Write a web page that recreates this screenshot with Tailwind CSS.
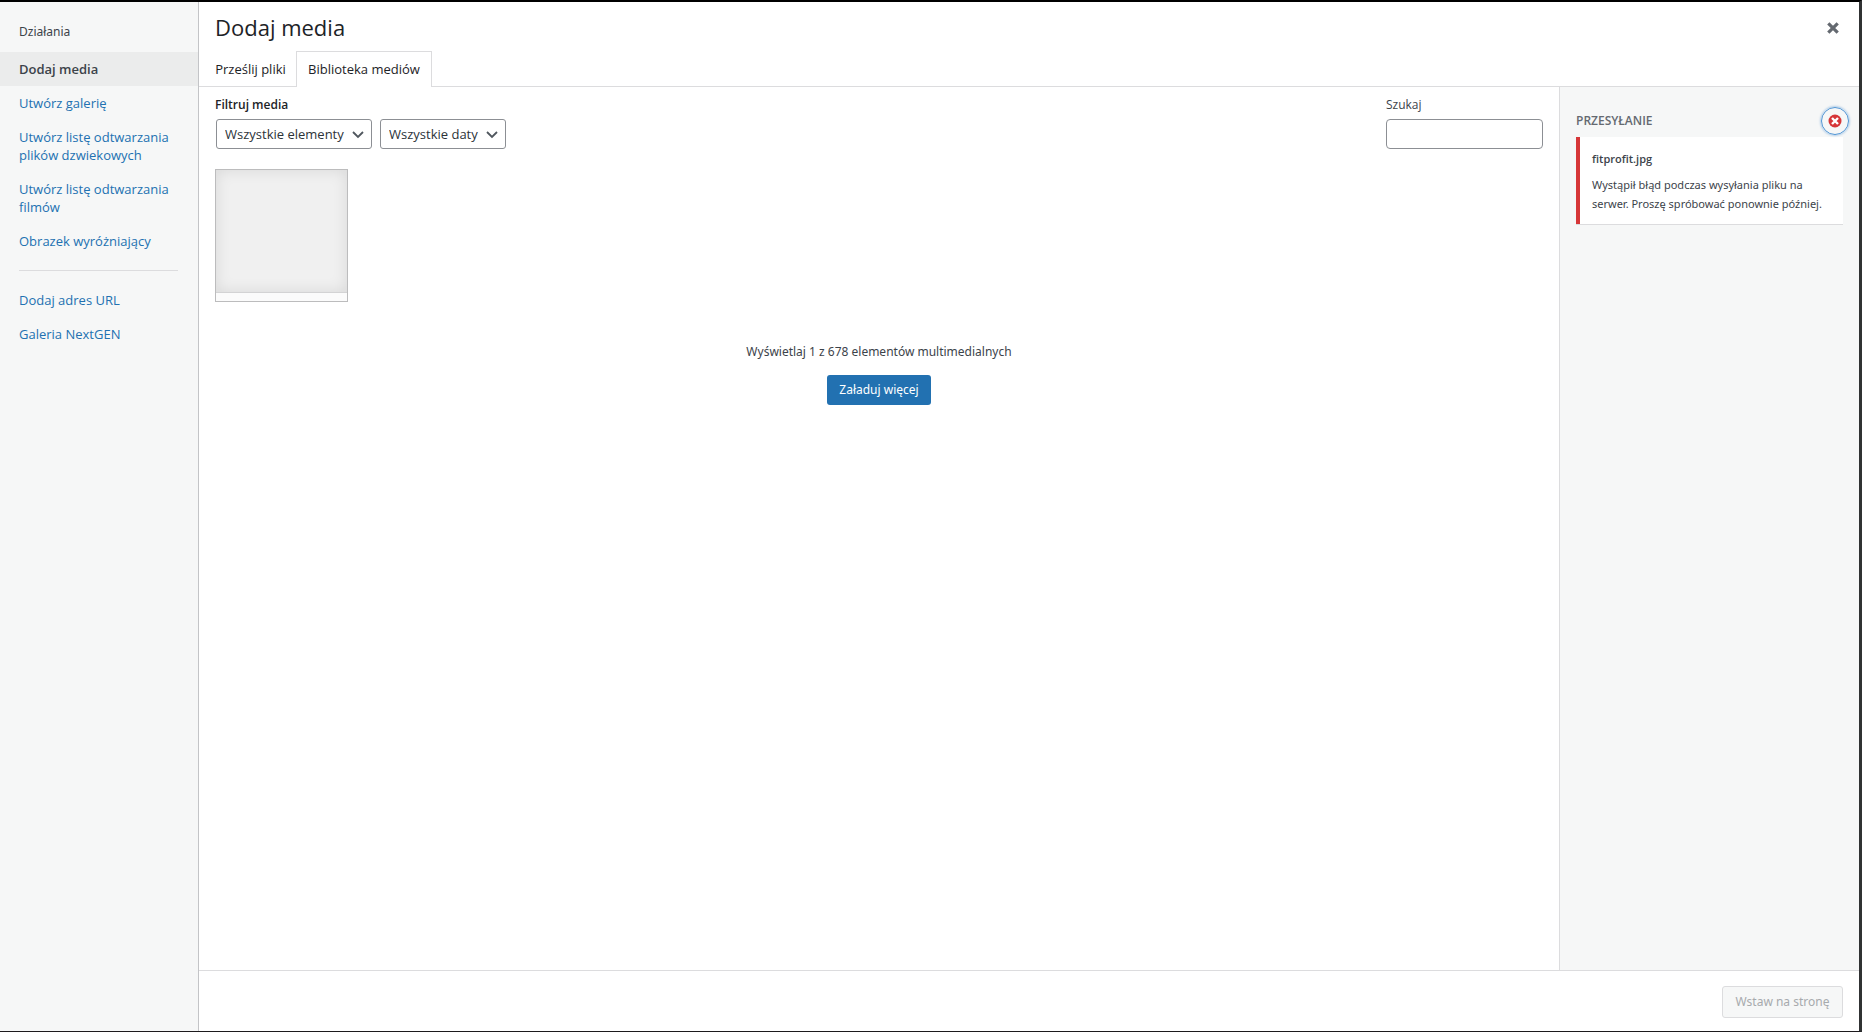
<!DOCTYPE html>
<html lang="pl">
<head>
<meta charset="utf-8">
<meta name="viewport" content="width=device-width, initial-scale=1">
<title>Dodaj media</title>
<script src="https://cdn.jsdelivr.net/npm/@tailwindcss/browser@4"></script>
</head>
<body class="bg-[#1d2023] font-['Open_Sans','Noto_Sans',sans-serif] text-[13px] leading-[18px] text-[#3c434a]">
<div class="flex h-screen flex-col border-t-2 border-r-[3px] border-b border-t-black border-r-[#303233] border-b-[#1d1a1d]">
  <div class="flex min-h-0 grow bg-white">

    <aside class="w-[199px] shrink-0 border-r border-[#c3c4c7] bg-[#f6f7f7]">
      <h2 class="px-[19px] pt-[21px] pb-[11px] font-['Noto_Sans',sans-serif] text-[12px]">Działania</h2>
      <nav class="flex flex-col text-[#2271b1]">
        <a href="#" class="bg-[#ebecec] px-[19px] py-2 font-semibold text-[#3c434a]">Dodaj media</a>
        <a href="#" class="px-[19px] py-2">Utwórz galerię</a>
        <a href="#" class="px-[19px] py-2">Utwórz listę odtwarzania plików dzwiekowych</a>
        <a href="#" class="px-[19px] py-2">Utwórz listę odtwarzania filmów</a>
        <a href="#" class="px-[19px] py-2">Obrazek wyróżniający</a>
        <hr class="my-3 mr-5 ml-[19px] border-[#dcdcde]">
        <a href="#" class="px-[19px] py-2">Dodaj adres URL</a>
        <a href="#" class="px-[19px] py-2">Galeria NextGEN</a>
      </nav>
    </aside>

    <main class="flex min-w-0 grow flex-col">
      <header class="flex items-start justify-between pr-4 pl-4">
        <h1 class="h-[49px] pt-[9px] text-[22px] leading-8 font-medium text-[#1d2327]">Dodaj media</h1>
        <button aria-label="Zamknij" class="mt-4 flex size-5 items-center justify-center">
          <svg viewBox="0 0 12 12" class="size-3" fill="none" stroke="#646970" stroke-width="3.2"><path d="M1.3 1.3 10.7 10.7M10.7 1.3 1.3 10.7"/></svg>
        </button>
      </header>
      <div role="tablist" class="flex h-9 shrink-0 border-b border-[#dcdcde] pl-1.5">
        <button role="tab" class="h-9 w-[91px] pb-px text-[#1d2327]">Prześlij pliki</button>
        <button role="tab" aria-selected="true" class="h-9 w-[136px] border border-b-0 border-[#dcdcde] bg-white pb-0.5 text-[#1d2327]">Biblioteka mediów</button>
      </div>

      <div class="flex min-h-0 grow">
        <section class="flex min-w-0 grow flex-col px-4 pt-[9px]">
          <div class="flex justify-between">
            <div>
              <h2 class="mb-[5px] text-[12px] font-semibold text-[#1d2327]">Filtruj media</h2>
              <div class="flex gap-2 pl-px text-[#2c3338]">
                <div class="relative">
                  <select aria-label="Filtruj według typu" class="h-[30px] w-[156px] appearance-none rounded-[3px] border border-[#8c8f94] bg-white pl-2"><option>Wszystkie elementy</option></select>
                  <svg viewBox="0 0 12 8" class="pointer-events-none absolute top-3 right-2 h-2 w-3" fill="none" stroke="#50575e" stroke-width="1.8"><path d="m1 1 5 5 5-5"/></svg>
                </div>
                <div class="relative">
                  <select aria-label="Filtruj według daty" class="h-[30px] w-[126px] appearance-none rounded-[3px] border border-[#8c8f94] bg-white pl-2"><option>Wszystkie daty</option></select>
                  <svg viewBox="0 0 12 8" class="pointer-events-none absolute top-3 right-2 h-2 w-3" fill="none" stroke="#50575e" stroke-width="1.8"><path d="m1 1 5 5 5-5"/></svg>
                </div>
              </div>
            </div>
            <div class="flex flex-col">
              <label for="search" class="mb-[5px] text-[12px]">Szukaj</label>
              <input id="search" type="search" class="h-[30px] w-[157px] rounded-[4px] border border-[#8c8f94] bg-white px-2">
            </div>
          </div>

          <ul class="mt-5 flex">
            <li class="flex size-[133px] flex-col border border-[#bcbcbd] bg-[#fbfbfb]">
              <div class="grow border-b border-[#d3d3d4] bg-[#f0f0f0] shadow-[inset_0_0_15px_rgba(0,0,0,0.1)]"></div>
              <div class="h-2"></div>
            </li>
          </ul>

          <div class="mt-[41px] flex flex-col items-center gap-3.5">
            <p class="font-['Noto_Sans',sans-serif] text-[12px]">Wyświetlaj 1 z 678 elementów multimedialnych</p>
            <button class="h-[30px] w-[104px] rounded-[3px] bg-[#2271b1] font-['Noto_Sans',sans-serif] text-[12px] text-white">Załaduj więcej</button>
          </div>
        </section>

        <aside class="w-[300px] shrink-0 border-l border-[#dcdcde] bg-[#f6f7f7] pr-4 pl-4">
          <div class="relative mt-[25px] mb-[7px] flex items-center">
            <h2 class="text-[12px] font-semibold text-[#646970]">PRZESYŁANIE</h2>
            <button aria-label="Zamknij błędy" class="absolute -top-[5px] -right-1.5 flex size-7 items-center justify-center rounded-full border border-[#4f94d4] shadow-[0_0_2px_1px_rgba(79,148,212,0.4)]">
              <svg viewBox="0 0 14 14" class="size-3.5"><circle cx="7" cy="7" r="6.5" fill="#d63638"/><path d="M4 4 10 10M10 4 4 10" stroke="#fff" stroke-width="2.4"/></svg>
            </button>
          </div>
          <div class="border-b border-[#dcdcde]">
            <div class="border-l-4 border-[#d63638] bg-white px-3 pt-[13px] pb-[11px]">
              <p class="mb-[7px] text-[11px] font-semibold">fitprofit.jpg</p>
              <p class="font-['Noto_Sans',sans-serif] text-[11px] leading-[19px]">Wystąpił błąd podczas wysyłania pliku na serwer. Proszę spróbować ponownie później.</p>
            </div>
          </div>
        </aside>
      </div>

      <footer class="flex h-[61px] shrink-0 items-start justify-end border-t border-[#dcdcde] pt-[15px] pr-4">
        <button disabled class="h-8 w-[121px] rounded-[3px] border border-[#dcdcde] bg-[#f6f7f7] font-['Noto_Sans',sans-serif] text-[12px] text-[#a7aaad]">Wstaw na stronę</button>
      </footer>
    </main>
  </div>
</div>
</body>
</html>
